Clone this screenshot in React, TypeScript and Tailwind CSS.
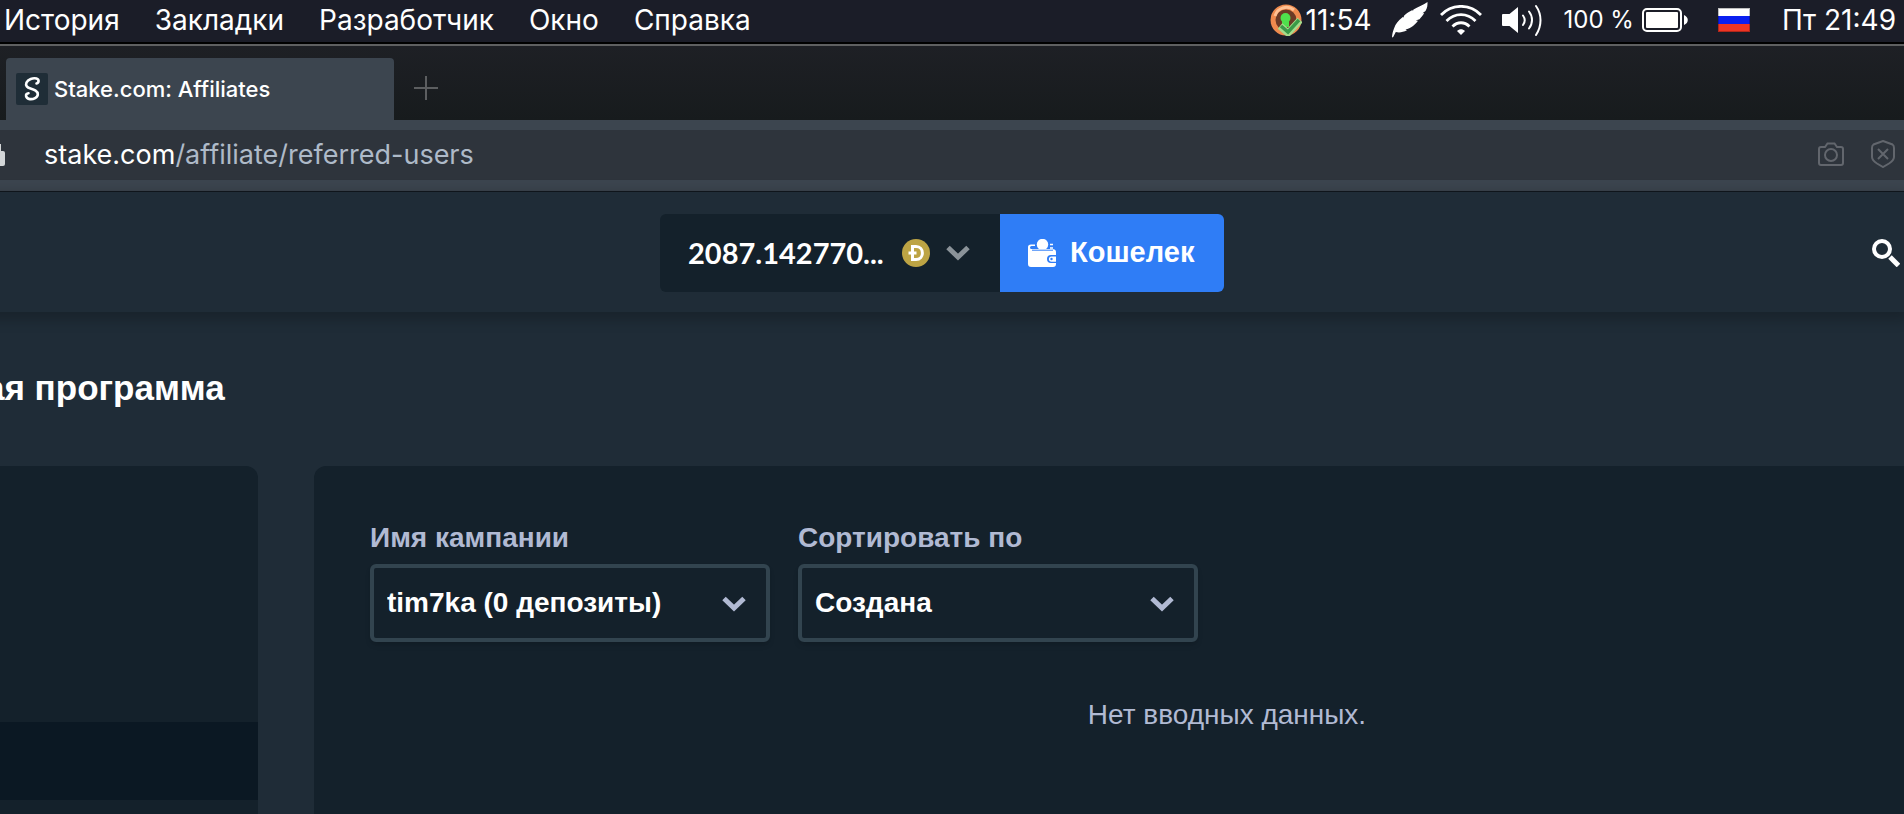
import type { ReactNode } from "react";

const menuItems = ["История", "Закладки", "Разработчик", "Окно", "Справка"];

function BotIcon() {
  return (
    <svg className="size-8" viewBox="0 0 32 32" fill="none">
      <circle cx="16" cy="16" r="13" fill="#6b3a26" stroke="#ee8a4e" strokeWidth="5" />
      <path d="M5 12a12 12 0 0 1 19-6" stroke="#ffc193" strokeWidth="3" />
      <circle cx="15.500" cy="14" r="5" fill="#4fe04c" />
      <path d="M12 17h7v6h-7z" fill="#4fe04c" />
      <path d="M10 22l8 7 12-13" stroke="#a5dc8c" strokeWidth="7" />
      <path d="M11 22l7 6 11-12" stroke="#3a9a48" strokeWidth="3.500" />
    </svg>
  );
}

function FeatherIcon() {
  return (
    <svg className="w-9 h-9" viewBox="0 0 36 36" fill="#fff">
      <path d="M35.500 0c-4 3-9 4.500-14 7.500l-.6 1.500-.5-.9c-3 1.700-5.900 3.300-8.400 5.700l-.4 1.800-.8-.6C6 19 3.500 22 2 26.500.8 29.500.2 32 0 35.500l1.200-.4 2.600-5c3.700.8 7.200.2 11.200-1.800l-1.500-.7c2.500-.7 5-1.600 7.500-3.600 2-1.600 3.500-3 5-5.200l-2.400-.3 3.900-1.300c2-2.400 3.700-4 4.700-6.200l-1.800.2 3.100-2.200c2-3.300 2-6 2-9z" />
    </svg>
  );
}

function WifiIcon() {
  return (
    <svg className="w-[42px] h-[30px]" viewBox="0 0 42 30" fill="none" stroke="#fff" strokeWidth="2.800">
      <path d="M1 10C12-1.500 30-1.500 41 10" />
      <path d="M6.500 16C15 7.500 27 7.500 35.500 16" />
      <path d="M12.500 21.500c5-5 12-5 17 0" />
      <path d="M17 26c2.500-2.300 5.500-2.300 8 0l-4 4z" fill="#fff" stroke="none" />
    </svg>
  );
}

function SpeakerIcon() {
  return (
    <svg className="w-[42px] h-8" viewBox="0 0 42 32" fill="none" stroke="#fff" strokeWidth="2" strokeLinecap="round">
      <path d="M1 10h6.500L16 3v26l-8.500-7H1a1 1 0 0 1-1-1V11a1 1 0 0 1 1-1z" fill="#fff" stroke="none" />
      <path d="M21 11.500c2.200 3 2.200 6.500 0 9.500" />
      <path d="M27 7.500c4 5 4 12 0 17" />
      <path d="M34 2c6 8.500 6 20 0 29" />
    </svg>
  );
}

function BatteryIcon() {
  return (
    <svg className="w-[46px] h-6" viewBox="0 0 46 24" fill="none">
      <rect x="1" y="1" width="38" height="22" rx="4" stroke="#fff" strokeWidth="2" />
      <rect x="4" y="4" width="32" height="16" rx="1" fill="#fff" />
      <path d="M42 7c5 2 5 8 0 10z" fill="#fff" />
    </svg>
  );
}

function RussianFlag() {
  return (
    <svg className="w-8 h-6" viewBox="0 0 32 24">
      <path d="M0 0h32v8H0z" fill="#fff" />
      <path d="M0 8h32v8H0z" fill="#0a1ff0" />
      <path d="M0 16h32v8H0z" fill="#ee3524" />
      <rect x=".5" y=".5" width="31" height="23" fill="none" stroke="#000" strokeOpacity=".25" />
    </svg>
  );
}

function MenuBar() {
  return (
    <header className="flex h-[42px] items-center justify-between bg-[#1b1d28] pl-1 pr-2 pb-[2px] text-[28px] leading-8 text-white">
      <nav className="flex gap-[35px]">
        {menuItems.map((item) => (
          <a key={item} href="#">
            {item}
          </a>
        ))}
      </nav>
      <div className="flex items-center">
        <BotIcon />
        <span className="ml-1 mr-5">11:54</span>
        <FeatherIcon />
        <div className="ml-3 mr-5">
          <WifiIcon />
        </div>
        <SpeakerIcon />
        <span className="ml-5 mr-2 text-2xl">100 %</span>
        <BatteryIcon />
        <div className="ml-[30px] mr-8">
          <RussianFlag />
        </div>
        <span>Пт 21:49</span>
      </div>
    </header>
  );
}

function TabBar() {
  return (
    <div className="flex h-[74px] items-end gap-5 bg-linear-to-b from-[#1e2025] to-[#171b1d] pl-[6px]">
      <a
        href="#"
        className="flex h-[62px] w-[388px] items-center gap-[6px] rounded-t bg-[#3c454f] px-[10px] text-[22px] font-medium text-white"
      >
        <svg className="size-8" viewBox="0 0 32 32" fill="none">
          <rect width="32" height="32" rx="2" fill="#1f2d37" />
          <path
            d="M20.500 10.500c2.500-.5 3-4 0-5-3.500-1-8.500.8-10 4-1.400 3.300.8 5 4 6 3.800 1.200 7.300 2.300 7.300 5.700 0 3.300-4.500 5.300-8 4.900-4.500-.6-5-5.600-1.300-5.900"
            stroke="#fff"
            strokeWidth="2.600"
            strokeLinecap="round"
          />
        </svg>
        Stake.com: Affiliates
      </a>
      <button className="mb-5" aria-label="Новая вкладка">
        <svg className="size-6" viewBox="0 0 24 24" stroke="#5c5e60" strokeWidth="2">
          <path d="M12 0v24M0 12h24" />
        </svg>
      </button>
    </div>
  );
}

function AddressBar() {
  return (
    <div className="border-b border-[#11181e] bg-[#3c454f] pt-[10px] pb-[11px]">
      <div className="flex h-[50px] items-center bg-[#2e343c] pr-2">
        <svg className="w-[6px] h-6" viewBox="0 0 6 24" fill="#d3d6d8">
          <path d="M0 8h3a2 2 0 0 1 2 2v11a2 2 0 0 1-2 2H0z" />
          <path d="M0 1v8" stroke="#d3d6d8" strokeWidth="2" />
        </svg>
        <button className="ml-[38px] flex-1 text-left text-[27px] leading-8 text-white">
          stake.com<span className="text-[#aebac8]">/affiliate/referred-users</span>
        </button>
        <div className="flex items-center gap-[26px] pb-[2px]">
          <button aria-label="Снимок">
            <svg className="w-[26px] h-6" viewBox="0 0 26 24" fill="none" stroke="#62666d" strokeWidth="2">
              <path d="M3 5h4l2.500-3.500h7L19 5h4a2 2 0 0 1 2 2v14a2 2 0 0 1-2 2H3a2 2 0 0 1-2-2V7a2 2 0 0 1 2-2z" />
              <circle cx="13" cy="13" r="6" />
            </svg>
          </button>
          <button aria-label="Защита">
            <svg className="w-[26px] h-7" viewBox="0 0 26 28" fill="none" stroke="#62666d" strokeWidth="2">
              <path d="M13 1l9.500 3.500Q24 5.500 24 8v9c0 3-2 4.500-5 6.500L13 27l-6-3.500c-3-2-5-3.500-5-6.500V8q0-2.500 1.500-3.500z" />
              <path d="M8 9l10 10M18 9L8 19" />
            </svg>
          </button>
        </div>
      </div>
    </div>
  );
}

function Chevron({ className }: { className: string }) {
  return (
    <svg className={className} viewBox="0 0 24 16" fill="none" stroke="currentColor" strokeWidth="5">
      <path d="M2 2.500l10 9.500 10-9.500" />
    </svg>
  );
}

function SiteHeader() {
  return (
    <div className="relative -ml-4 grid h-[120px] grid-cols-[1fr_auto_1fr] items-center bg-[#1f2c37] pt-[2px] pr-1 shadow-[0_4px_12px_4px_rgba(0,0,0,0.2)]">
      <span />
      <div className="flex h-[78px] w-[564px] overflow-hidden rounded-md text-[29px] font-bold text-white">
        <button className="flex flex-1 items-center bg-[#14212b] pl-7 font-['Lato','Liberation_Sans',sans-serif]">
          <span className="w-[198px] text-left">2087.142770...</span>
          <svg className="ml-4 size-7" viewBox="0 0 28 28">
            <circle cx="14" cy="14" r="14" fill="#bda444" />
            <path d="M10.500 7.500h3.500c8.500 0 8.500 13 0 13h-3.500zM6.500 14h8" fill="none" stroke="#fff" strokeWidth="3" />
          </svg>
          <Chevron className="ml-4 h-4 w-6 text-[#8b9399]" />
        </button>
        <button className="flex w-56 items-center gap-[14px] bg-[#2f7df6] pl-7 font-['Liberation_Sans',sans-serif]">
          <svg className="size-7" viewBox="0 0 28 28">
            <path
              d="M0 8q0-2.500 3-2.500h4V7H3.500Q2 7 2 8.500T3.500 10H24q4 0 4 3v3h-5a4 4 0 0 0 0 8h5v1q0 3-3 3H3q-3 0-3-3z"
              fill="#fff"
            />
            <circle cx="14.500" cy="5.500" r="5.700" fill="#fff" />
            <path d="M4 11.200h21" stroke="#2f7df6" strokeWidth="1" />
            <path d="M22 5.500h3M22 9h3" stroke="#fff" strokeWidth="1.500" />
            <path d="M28 17.500h-4.500a2.600 2.600 0 0 0 0 5.200H28z" fill="#fff" />
            <circle cx="23.500" cy="20" r="1.200" fill="#2f7df6" />
          </svg>
          Кошелек
        </button>
      </div>
      <button className="justify-self-end" aria-label="Поиск">
        <svg className="size-7" viewBox="0 0 28 28" fill="none" stroke="#fff">
          <circle cx="10" cy="10" r="8" strokeWidth="4" />
          <path d="M18 18l8.500 8.500" strokeWidth="5" />
        </svg>
      </button>
    </div>
  );
}

function SelectField({ id, label, children }: { id: string; label: string; children: ReactNode }) {
  return (
    <div className="w-[400px] text-[28px] font-bold">
      <label htmlFor={id} className="mb-2 block leading-9 text-[#b1bad3]">
        {label}
      </label>
      <div className="relative">
        <select
          id={id}
          className="h-[78px] w-full appearance-none rounded-md border-4 border-[#32444f] bg-[#14212b] px-[13px] text-white shadow-md"
        >
          {children}
        </select>
        <Chevron className="pointer-events-none absolute top-8 right-6 h-4 w-6 text-[#b1bad3]" />
      </div>
    </div>
  );
}

export default function App() {
  return (
    <div className="flex min-h-screen flex-col overflow-hidden bg-[#1f2c37] font-['Inter',sans-serif]">
      <MenuBar />
      <div className="border-t-2 border-black bg-[#5f6061] pt-[2px]">
        <TabBar />
      </div>
      <AddressBar />
      <SiteHeader />
      <main className="flex flex-1 flex-col font-['Liberation_Sans',sans-serif]">
        <h1 className="-ml-[15px] pt-14 pb-[58px] text-[35px] leading-10 font-bold text-white">ая программа</h1>
        <div className="flex flex-1 gap-14">
          <aside className="w-[258px] rounded-tr-xl bg-[#14212b] pt-64">
            <div className="h-[78px] bg-[#0b1823]" />
          </aside>
          <section className="-mr-[236px] flex-1 rounded-tl-xl bg-[#14212b] px-14 pt-[54px]">
            <div className="flex gap-7">
              <SelectField id="campaign" label="Имя кампании">
                <option>tim7ka (0 депозиты)</option>
              </SelectField>
              <SelectField id="sort" label="Сортировать по">
                <option>Создана</option>
              </SelectField>
            </div>
            <p className="pt-[55px] text-center text-[28px] leading-9 text-[#b1bad3]">Нет вводных данных.</p>
          </section>
        </div>
      </main>
    </div>
  );
}
